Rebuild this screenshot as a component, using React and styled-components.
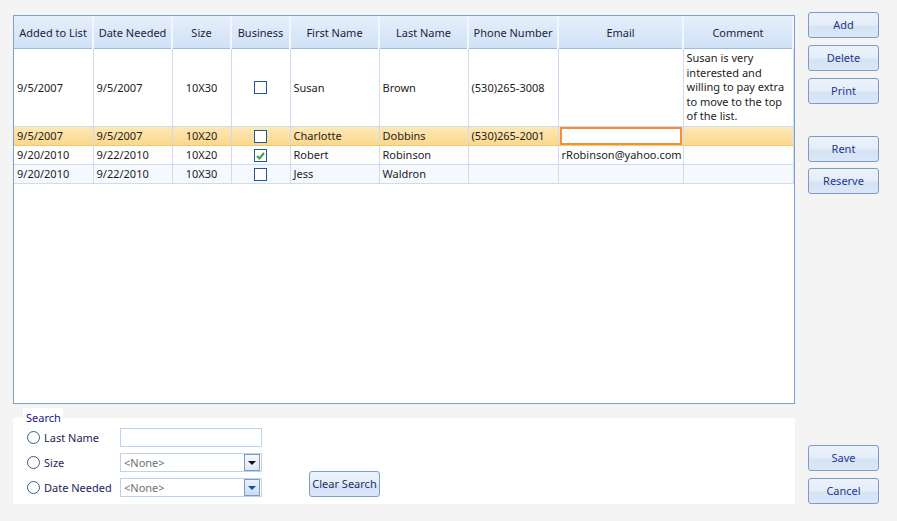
import styled, { createGlobalStyle } from "styled-components";

const GlobalStyle = createGlobalStyle`
  html, body {
    margin: 0;
    padding: 0;
    background: #f4f4f4;
  }
  body {
    font-family: "Noto Sans", "Open Sans", sans-serif;
    font-size: 11px;
    color: #1c1c1c;
  }
`;

const Page = styled.div`
  width: 897px;
  height: 521px;
  box-sizing: border-box;
  padding: 12px 0 0 13px;
  display: flex;
  gap: 13px;
`;

const LeftColumn = styled.div`
  display: flex;
  flex-direction: column;
  width: 782px;
  padding-top: 3px;
`;

const GridBox = styled.div`
  height: 389px;
  box-sizing: border-box;
  border: 1px solid #7da2ce;
  background: #fff;
`;

const Table = styled.table`
  border-collapse: collapse;
  table-layout: fixed;
  width: 778px;
`;

const HeadCell = styled.th`
  height: 32px;
  padding: 0 3px;
  font-weight: normal;
  color: #1e1e3c;
  text-align: center;
  white-space: nowrap;
  background: linear-gradient(#e6effb, #d0e1f7);
  border-right: 2px solid #f3f7fd;
  border-bottom: 1px solid #9ebbdd;
`;

const Row = styled.tr`
  background: ${(p) =>
    p.$selected
      ? "linear-gradient(#fde9b6, #fcd68a)"
      : p.$alt
      ? "#f5f9fe"
      : "#fff"};
  & > td {
    border-bottom: 1px solid ${(p) => (p.$selected ? "#f3c670" : "#cddcf0")};
    ${(p) => p.$selected && "border-top: 1px solid #f3c670;"}
  }
`;

const Cell = styled.td`
  height: ${(p) => p.$h || 19}px;
  padding: 0 3px;
  box-sizing: border-box;
  border-right: 1px solid #cddcf0;
  text-align: ${(p) => (p.$center ? "center" : "left")};
  vertical-align: ${(p) => (p.$top ? "top" : "middle")};
  white-space: ${(p) => (p.$wrap ? "normal" : "nowrap")};
  line-height: ${(p) => (p.$wrap ? "14.6px" : "14px")};
  overflow: hidden;
  ${(p) => p.$top && "padding-top: 2px;"}
`;

const EditCell = styled.td`
  padding: 0;
  border-right: 1px solid #cddcf0;
  vertical-align: middle;
`;

const EditBox = styled.div`
  height: 14px;
  margin: 0 1px;
  border: 2px solid #f88d3a;
  background: #fff;
`;

const Check = styled.span`
  display: block;
  margin: 0 auto;
  width: 11px;
  height: 11px;
  border: 1px solid #1e5a96;
  background: #fff;
  position: relative;
`;

const Checkmark = () => (
  <svg
    width="9"
    height="8"
    viewBox="0 0 9 8"
    style={{ position: "absolute", left: 1, top: 2 }}
  >
    <path d="M1 4 L3.5 6.5 L8 1" stroke="#3ea33a" strokeWidth="2" fill="none" />
  </svg>
);

const SearchWrap = styled.div`
  margin-top: 4px;
  display: flex;
  flex-direction: column;
`;

const Legend = styled.div`
  width: 40px;
  height: 10px;
  margin-left: 10px;
  background: #fff;
  color: #16168a;
  line-height: 19px;
  padding-left: 3px;
  box-sizing: border-box;
  position: relative;
  z-index: 1;
`;

const SearchPanel = styled.div`
  height: 86px;
  box-sizing: border-box;
  background: #fff;
  padding: 10px 0 7px 14px;
  display: flex;
  align-items: flex-end;
`;

const FormGrid = styled.div`
  display: grid;
  grid-template-columns: 93px 142px;
  row-gap: 6px;
  align-self: flex-start;
`;

const RadioLabel = styled.label`
  display: flex;
  align-items: center;
  gap: 4px;
  color: #1e1e5a;
  height: 19px;
`;

const Radio = styled.span`
  width: 11px;
  height: 11px;
  border: 1px solid #3a5d8c;
  border-radius: 50%;
  background: #fff;
`;

const TextInput = styled.div`
  height: 19px;
  box-sizing: border-box;
  border: 1px solid #bcd3ef;
  background: #fff;
`;

const Combo = styled.div`
  height: 19px;
  box-sizing: border-box;
  border: 1px solid #bcd3ef;
  background: #fff;
  display: flex;
  align-items: center;
  justify-content: space-between;
  color: #707070;
  padding-left: 3px;
`;

const DropButton = styled.span`
  width: 14px;
  height: 15px;
  margin-right: 1px;
  border: 1px solid #7b9cc8;
  background: ${(p) =>
    p.$hot ? "linear-gradient(#eaf2fc, #c9dcf3)" : "linear-gradient(#f4f7fb, #dfe8f3)"};
  display: flex;
  align-items: center;
  justify-content: center;
`;

const Arrow = styled.span`
  width: 0;
  height: 0;
  border-left: 4px solid transparent;
  border-right: 4px solid transparent;
  border-top: 4px solid ${(p) => p.$color};
`;

const Button = styled.button`
  width: 71px;
  height: 26px;
  padding: 0 0 1px;
  margin-top: ${(p) => p.$gap || 0}px;
  box-sizing: border-box;
  border: 1px solid #7c9bc6;
  border-radius: 3px;
  background: linear-gradient(#ecf2fb 0%, #e4edf9 50%, #d5e3f5 55%, #dbe7f7 100%);
  color: #1c3a8c;
  font-family: inherit;
  font-size: 11px;
`;

const ClearButton = styled(Button)`
  margin-left: 47px;
  color: #1e2f60;
`;

const RightColumn = styled.div`
  display: flex;
  flex-direction: column;
  height: 492px;
`;

const Spacer = styled.div`
  flex: 1;
`;

const columns = [
  ["Added to List", 79],
  ["Date Needed", 79],
  ["Size", 59],
  ["Business", 59],
  ["First Name", 89],
  ["Last Name", 89],
  ["Phone Number", 90],
  ["Email", 125],
  ["Comment", 110],
];

const rows = [
  {
    added: "9/5/2007",
    needed: "9/5/2007",
    size: "10X30",
    business: false,
    first: "Susan",
    last: "Brown",
    phone: "(530)265-3008",
    email: "",
    comment: "Susan is very interested and willing to pay extra to move to the top of the list.",
    h: 78,
  },
  {
    added: "9/5/2007",
    needed: "9/5/2007",
    size: "10X20",
    business: false,
    first: "Charlotte",
    last: "Dobbins",
    phone: "(530)265-2001",
    editing: true,
    comment: "",
    selected: true,
  },
  {
    added: "9/20/2010",
    needed: "9/22/2010",
    size: "10X20",
    business: true,
    first: "Robert",
    last: "Robinson",
    phone: "",
    email: "rRobinson@yahoo.com",
    comment: "",
  },
  {
    added: "9/20/2010",
    needed: "9/22/2010",
    size: "10X30",
    business: false,
    first: "Jess",
    last: "Waldron",
    phone: "",
    email: "",
    comment: "",
    alt: true,
  },
];

export default function App() {
  return (
    <>
      <GlobalStyle />
      <Page>
        <LeftColumn>
          <GridBox>
            <Table>
              <colgroup>
                {columns.map(([name, w]) => (
                  <col key={name} style={{ width: w }} />
                ))}
              </colgroup>
              <thead>
                <tr>
                  {columns.map(([name]) => (
                    <HeadCell key={name}>{name}</HeadCell>
                  ))}
                </tr>
              </thead>
              <tbody>
                {rows.map((r, i) => (
                  <Row key={i} $selected={r.selected} $alt={r.alt}>
                    <Cell $h={r.h}>{r.added}</Cell>
                    <Cell>{r.needed}</Cell>
                    <Cell $center>{r.size}</Cell>
                    <Cell $center>
                      <Check>{r.business && <Checkmark />}</Check>
                    </Cell>
                    <Cell>{r.first}</Cell>
                    <Cell>{r.last}</Cell>
                    <Cell>{r.phone}</Cell>
                    {r.editing ? (
                      <EditCell>
                        <EditBox />
                      </EditCell>
                    ) : (
                      <Cell>{r.email}</Cell>
                    )}
                    <Cell $wrap $top>
                      {r.comment}
                    </Cell>
                  </Row>
                ))}
              </tbody>
            </Table>
          </GridBox>
          <SearchWrap>
            <Legend>Search</Legend>
            <SearchPanel>
              <FormGrid>
                <RadioLabel>
                  <Radio />
                  Last Name
                </RadioLabel>
                <TextInput />
                <RadioLabel>
                  <Radio />
                  Size
                </RadioLabel>
                <Combo>
                  &lt;None&gt;
                  <DropButton>
                    <Arrow $color="#111" />
                  </DropButton>
                </Combo>
                <RadioLabel>
                  <Radio />
                  Date Needed
                </RadioLabel>
                <Combo>
                  &lt;None&gt;
                  <DropButton $hot>
                    <Arrow $color="#1f4f9a" />
                  </DropButton>
                </Combo>
              </FormGrid>
              <ClearButton>Clear Search</ClearButton>
            </SearchPanel>
          </SearchWrap>
        </LeftColumn>
        <RightColumn>
          <Button>Add</Button>
          <Button $gap={7}>Delete</Button>
          <Button $gap={7}>Print</Button>
          <Button $gap={32}>Rent</Button>
          <Button $gap={6}>Reserve</Button>
          <Spacer />
          <Button>Save</Button>
          <Button $gap={7}>Cancel</Button>
        </RightColumn>
      </Page>
    </>
  );
}
